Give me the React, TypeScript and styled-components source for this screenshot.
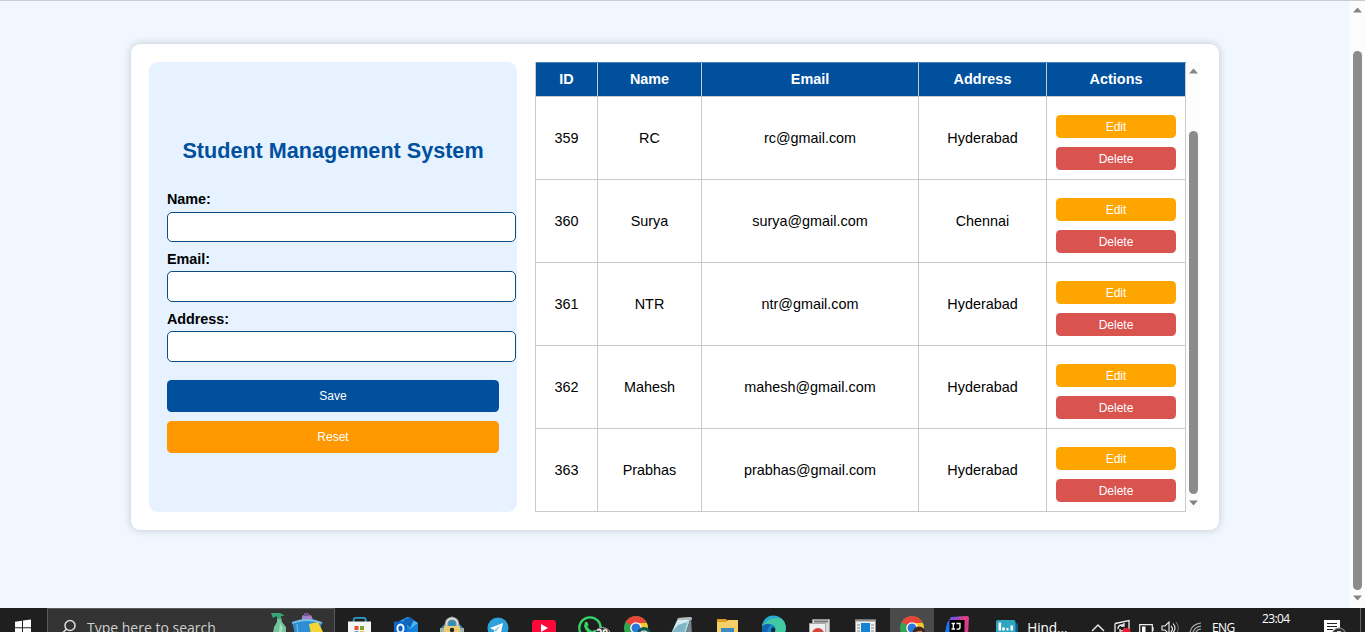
import React from 'react';
import styled, { createGlobalStyle } from 'styled-components';

const GlobalStyle = createGlobalStyle`
  * { box-sizing: border-box; }
  body { margin: 0; overflow: hidden; font-family: "Liberation Sans", Arial, sans-serif; color: #000; }
`;

const Screen = styled.div`
  width: 1365px;
  height: 632px;
  display: flex;
  flex-direction: column;
  overflow: hidden;
`;

const Viewport = styled.main`
  height: 608px;
  display: flex;
  background: #f0f7ff;
  border-top: 1px solid #c8cdd3;
`;

const Page = styled.div`
  width: 1350px;
  padding: 43px 0 0 131px;
`;

const Card = styled.section`
  width: 1088px;
  height: 486px;
  padding: 18px;
  display: flex;
  gap: 18px;
  background: #fff;
  border-radius: 9px;
  box-shadow: 0 0 9px rgba(0, 0, 0, 0.2);
`;

const Form = styled.form`
  width: 368px;
  height: 450px;
  padding: 75px 18px 0;
  display: flex;
  flex-direction: column;
  background: #e6f2ff;
  border-radius: 9px;
`;

const Title = styled.h2`
  margin: 0 0 35px;
  height: 27px;
  line-height: 28px;
  font-size: 21.6px;
  text-align: center;
  white-space: nowrap;
  color: #00509e;
`;

const Label = styled.label<{ $lineHeight?: number }>`
  height: 13px;
  line-height: ${(p) => p.$lineHeight ?? 16}px;
  margin-top: -7px;
  padding-bottom: 20px;
  font-size: 14.4px;
  font-weight: bold;
  letter-spacing: -0.05px;
`;

const Field = styled.input<{ $h: number }>`
  flex: none;
  width: 349px;
  height: ${(p) => p.$h}px;
  margin-bottom: 16px;
  padding: 0 9px;
  border: 1px solid #0f4c81;
  border-radius: 5px;
  background: #fff;
  outline: none;
`;

const FormButton = styled.button<{ $bg: string }>`
  width: 332px;
  height: 32px;
  margin-bottom: 9px;
  padding: 0;
  border: 0;
  border-radius: 4.5px;
  background: ${(p) => p.$bg};
  color: #fff;
  font: 12px "Liberation Sans", Arial, sans-serif;
`;

const Buttons = styled.div`
  display: flex;
  flex-direction: column;
  padding-top: 2px;
`;

const TableArea = styled.div`
  display: flex;
  height: 450px;
`;

const Table = styled.div`
  width: 651px;
  border-left: 1px solid #c8cacc;
`;

const Row = styled.div<{ $head?: boolean }>`
  display: grid;
  grid-template-columns: 62px 104px 217px 128px 139px;
  height: ${(p) => (p.$head ? 35 : 83)}px;
  background: ${(p) => (p.$head ? '#00509e' : '#fff')};
  color: ${(p) => (p.$head ? '#fff' : '#000')};
  font-weight: ${(p) => (p.$head ? 'bold' : 'normal')};
  border-top: ${(p) => (p.$head ? '1px solid #4b83b8' : '0')};
`;

const Cell = styled.div<{ $spacing?: number }>`
  display: flex;
  align-items: center;
  justify-content: center;
  font-size: 14.4px;
  letter-spacing: ${(p) => p.$spacing ?? 0}px;
  border-right: 1px solid #c8cacc;
  border-bottom: 1px solid #c8cacc;
`;

const HeadCell = styled(Cell)`
  padding-bottom: 2px;
`;

const Actions = styled.div`
  padding: 18px 9px 0;
  display: flex;
  flex-direction: column;
  gap: 9px;
  border-right: 1px solid #c8cacc;
  border-bottom: 1px solid #c8cacc;
`;

const ActionButton = styled.button<{ $bg: string }>`
  width: 120px;
  height: 23px;
  padding: 0;
  border: 0;
  border-radius: 4.5px;
  background: ${(p) => p.$bg};
  color: #fff;
  font: 12px "Liberation Sans", Arial, sans-serif;
`;

const ScrollTrack = styled.div<{ $top: number; $w: number }>`
  width: ${(p) => p.$w}px;
  height: 100%;
  padding: ${(p) => p.$top}px 0 0 3px;
  display: flex;
  flex-direction: column;
  background: #fcfcfc;
`;

const Thumb = styled.div<{ $before: number; $h: number; $after: number }>`
  width: 9px;
  height: ${(p) => p.$h}px;
  margin: ${(p) => p.$before}px 0 ${(p) => p.$after}px;
  border-radius: 5px;
  background: #8b8b8b;
`;

const ArrowSvg = styled.svg`
  display: block;
  flex: none;
`;

const Arrow = ({ down }: { down?: boolean }) => (
  <ArrowSvg width="9" height="6" viewBox="0 0 9 6">
    <path d={down ? 'M0 .5h9L4.5 5.5z' : 'M0 5.5h9L4.5 .5z'} fill="#858585" />
  </ArrowSvg>
);

const Taskbar = styled.footer`
  height: 24px;
  display: flex;
  overflow: hidden;
  background: #1f1f1f;
  color: #fff;
  font-family: "Open Sans", "Noto Sans", sans-serif;
  > svg { flex: none; }
`;

const SearchBox = styled.div`
  width: 288px;
  height: 40px;
  display: flex;
  flex: none;
  background: #333;
  border: 1px solid #5a5a5a;
  margin-right: 1px;
`;

const SearchText = styled.span`
  width: 181px;
  height: 30px;
  padding-top: 9px;
  line-height: 20px;
  font-size: 14px;
  white-space: nowrap;
  color: #d0d0d0;
`;

const Slot = styled.div<{ $active?: boolean }>`
  width: 46px;
  height: 24px;
  flex: none;
  background: ${(p) => (p.$active ? 'linear-gradient(90deg, #1f1f1f 2px, #4a4a4a 2px)' : 'none')};
  svg { display: block; }
`;

const TrayText = styled.span<{ $w: number; $top: number; $size: number }>`
  width: ${(p) => p.$w}px;
  flex: none;
  padding-top: ${(p) => p.$top}px;
  line-height: 18px;
  font-size: ${(p) => p.$size}px;
  letter-spacing: ${(p) => (p.$size < 13 ? -0.6 : -0.1)}px;
  white-space: nowrap;
`;

const Badge = styled.text`
  font: bold 10px "Open Sans", sans-serif;
  fill: #fff;
`;

const icons: { name: string; active?: boolean; art: React.ReactNode }[] = [
  {
    name: 'store',
    art: (
      <>
        <path d="M17.700 15v-3.200q0-2 2-2h8q2 0 2 2V15" fill="none" stroke="#2e9fc9" strokeWidth="1.800" />
        <path d="M12 13.500h23V30H12z" fill="#f5f5f5" />
        <path d="M18.500 18h4v4h-4z" fill="#e2522f" /><path d="M24 18h4v4h-4z" fill="#7ba82c" />
        <path d="M18.500 23.200h4v4h-4z" fill="#27a0da" /><path d="M24 23.200h4v4h-4z" fill="#f1b521" />
      </>
    ),
  },
  {
    name: 'outlook',
    art: (
      <>
        <path d="M17 13l9-4 10 6v12H17z" fill="#1681d8" />
        <path d="M26 9l10 6-8 6-8-9z" fill="#45b8f2" /><path d="M21 12l7-3 4 3-4 8z" fill="#1263b5" />
        <path d="M12 13.500h13V30H12z" fill="#0a68c8" />
        <ellipse cx="18.500" cy="20.500" rx="3.100" ry="4" fill="none" stroke="#fff" strokeWidth="1.900" />
      </>
    ),
  },
  {
    name: 'lock',
    art: (
      <>
        <path d="M24 8l12 13H12z" fill="#2f91ba" />
        <path d="M18.500 19v-3.500a5.500 5 0 0 1 11 0V19" fill="none" stroke="#8c8c88" strokeWidth="3.600" />
        <path d="M18.500 19v-3.500a5.500 5 0 0 1 11 0V19" fill="none" stroke="#deded8" strokeWidth="1.800" />
        <path d="M16 18h16v12H16z" fill="#e9ca73" /><circle cx="24" cy="22" r="2.200" fill="#272318" /><path d="M23 22h2v4h-2z" fill="#272318" />
        <path d="M12 20h4v5h-4zM32 20h4v5h-4z" fill="#9fb7aa" />
      </>
    ),
  },
  {
    name: 'messages',
    art: (
      <>
        <circle cx="24" cy="20" r="10.500" fill="#2ba3da" />
        <path d="M16 20l13-5-2.500 12-4-3-2 2-.5-4z" fill="#fff" /><path d="M20 22l7-5-5 7" fill="#a6cfe2" />
      </>
    ),
  },
  {
    name: 'video',
    art: (
      <>
        <rect x="12" y="12" width="24" height="19" rx="3" fill="#fc0839" />
        <path d="M21 16l7 4-7 4z" fill="#fff" />
      </>
    ),
  },
  {
    name: 'chat',
    art: (
      <>
        <circle cx="24" cy="20" r="10.700" fill="#1f1f1f" stroke="#35d366" strokeWidth="2.300" />
        <path d="M19 14q2-1 2.800 1l.8 2-1.300 1.700q1.800 3 5 4.500l1.700-1.500 3 1.500-1 3q-9 1-12-8z" fill="#35d366" />
        <circle cx="36.500" cy="28" r="8.500" fill="#303030" stroke="#aaa" />
        <Badge x="30.500" y="28.500">20</Badge>
      </>
    ),
  },
  {
    name: 'browser',
    art: (
      <>
        <circle cx="24" cy="20" r="12" fill="#33a552" />
        <path d="M24 20L13.600 14a12 12 0 0 1 20.800 0z" fill="#e8443a" /><path d="M24 15h10.900A12 12 0 0 1 30 30z" fill="#fac72b" />
        <circle cx="24" cy="20" r="5.800" fill="#fff" /><circle cx="24" cy="20" r="4.500" fill="#2d76dc" />
        <circle cx="32" cy="26" r="7" fill="#0b5a50" /><path d="M28.500 26q0-3 3.500-3t3.500 3" fill="none" stroke="#c3d6d1" strokeWidth="1.500" />
      </>
    ),
  },
  {
    name: 'notes',
    art: (
      <>
        <path d="M20 10l13-1-6 19H12z" fill="#a9d4df" /><path d="M21 10l10 0-7 14H14z" fill="#d5edf0" />
        <path d="M33 9l1 17-5 4-2-2z" fill="#76858a" /><path d="M20 10l14-.5v2.200l-14 .3z" fill="#b8b9b4" />
        <path d="M12 26l8-9 9-3-4 14z" fill="#80b4c7" />
      </>
    ),
  },
  {
    name: 'files',
    art: (
      <>
        <path d="M13 11h9l2 2h10v17H13z" fill="#d99d23" /><path d="M13 14h9l2-2h10v18H13z" fill="#f6cf66" />
        <path d="M17 20h13v9H17z" fill="#3c8ac4" />
      </>
    ),
  },
  {
    name: 'edge',
    art: (
      <>
        <circle cx="24" cy="20" r="12" fill="#1689ce" />
        <path d="M12 18C15 4 35 5 36 20c0 7-9 8-12 4q4-4-1-7-5-3-11 1z" fill="#42c9a2" />
        <path d="M12 18C14 6 26 5 31 11q-10-4-19 7z" fill="#29a9d6" /><path d="M12 21q2-7 9-4-5 3-3 13-7-3-6-9z" fill="#1264b0" />
        <path d="M23 19q-2 1-2 3 0 5 7 5-3-2-3-4 1-2-2-4z" fill="#172c39" />
      </>
    ),
  },
  {
    name: 'capture',
    art: (
      <>
        <path d="M16.500 11.500h17V30h-17z" fill="#d8d8d8" stroke="#999" />
        <path d="M18 13.500h14" stroke="#777" strokeWidth="2" />
        <path d="M13.500 15.500h16V30h-16z" fill="#eee" stroke="#aaa" />
        <circle cx="22" cy="26" r="6" fill="#d44337" />
      </>
    ),
  },
  {
    name: 'reader',
    art: (
      <>
        <path d="M13.500 12h20v18h-20z" fill="#f2f2f2" stroke="#969696" />
        <path d="M13 12.500h21" stroke="#909090" strokeWidth="2" /><path d="M19 15h9v15h-9z" fill="#1682d5" />
        <path d="M15 17h3m-3 3h3m-3 3h3m11-6h3m-3 3h3m-3 3h3" stroke="#858585" />
      </>
    ),
  },
  {
    name: 'active-browser',
    active: true,
    art: (
      <>
        <circle cx="24" cy="20" r="12" fill="#33a552" />
        <path d="M24 20L13.600 14a12 12 0 0 1 20.800 0z" fill="#e8443a" /><path d="M24 15h10.900A12 12 0 0 1 30 30z" fill="#fac72b" />
        <circle cx="24" cy="20" r="5.800" fill="#fff" /><circle cx="24" cy="20" r="4.500" fill="#2d76dc" />
        <circle cx="31" cy="25" r="6.500" fill="#3d251e" /><path d="M27 24l6-1.500 2 2v5h-8z" fill="#c58362" />
      </>
    ),
  },
  {
    name: 'ide',
    art: (
      <>
        <path d="M17 9l17-1v20l-8 4-15-7 2-10z" fill="#1976ee" /><path d="M21 9l12-1q2 0 2 2l-1 17-9-1z" fill="#d93e89" />
        <path d="M17 9h9l-5 7h-7z" fill="#8d49d8" /><path d="M15.500 12h15v15h-15z" fill="#000" />
        <path d="M17.500 15.500h3.500m-1.700 0v5.500M17.500 21h3.500m1.500-5.500h3.500v4q0 1.700-2 1.700h-1.500" fill="none" stroke="#fff" strokeWidth="1.300" />
      </>
    ),
  },
  {
    name: 'monitor',
    art: (
      <>
        <path d="M28 15h8q2 0 2 2v13H28z" fill="#0c5b91" /><rect x="16" y="12" width="19.500" height="18" rx="2" fill="#30a5c2" />
        <path d="M19.800 14.500v8m3.700-3v3m8.300-5v5" stroke="#fff" strokeWidth="2.600" /><path d="M26.500 20h2v2.500h-2z" fill="#fff" />
      </>
    ),
  },
];

const students = [
  { id: 359, name: 'RC', email: 'rc@gmail.com', address: 'Hyderabad' },
  { id: 360, name: 'Surya', email: 'surya@gmail.com', address: 'Chennai' },
  { id: 361, name: 'NTR', email: 'ntr@gmail.com', address: 'Hyderabad' },
  { id: 362, name: 'Mahesh', email: 'mahesh@gmail.com', address: 'Hyderabad' },
  { id: 363, name: 'Prabhas', email: 'prabhas@gmail.com', address: 'Hyderabad' },
];

const CleaningArt = () => (
  <svg width="60" height="24" viewBox="268 609 60 24">
    <path d="M277 617h4l1 5 4 5v6h-13l1-6 3-5z" fill="#73c49a" />
    <path d="M271 613h9l4 2-1 1h-2v3h-4v-3l-4 2z" fill="#36a578" /><path d="M280 623l3 5-1 4h-3z" fill="#a2dfbd" />
    <path d="M302 617q0-2 2-2h5q3 0 3 2l2 6h-13z" fill="#a284c6" /><path d="M304 613h5v3h-5z" fill="#70558d" />
    <path d="M292 622q15-4 30 0l-3 12h-24z" fill="#2d8ed6" /><path d="M292 623q15-6 30 0" fill="none" stroke="#77c2eb" strokeWidth="1.800" />
    <path d="M309 624l9-2 6 12h-13z" fill="#f4d636" /><path d="M297 624q0 5 1 9" fill="none" stroke="#77c2eb" />
  </svg>
);

const Tray = () => (
  <svg width="121" height="24" viewBox="1091 608 121 24" fill="none">
    <path d="M1092 631l6-6 6 6" stroke="#e5e5e5" strokeWidth="1.500" />
    <path d="M1115 623.500l14-3V632m-14-8.500V632" stroke="#eee" strokeWidth="1.300" />
    <path d="M1118 629q0-4 4-4h2m0-2v3h-3m4 2q0 3-5 3v-2" stroke="#eee" strokeWidth="1.300" />
    <circle cx="1126.500" cy="632" r="4" fill="#e91931" />
    <path d="M1139.700 624.700h12.600v9h-12.600zM1153 627v4" stroke="#eee" strokeWidth="1.200" /><path d="M1142 626.500h3.500v6H1142z" fill="#fff" />
    <path d="M1162 626h3l4-4v12l-4-4h-3zM1171 626q3 3 0 6M1173 623.500q4 4.500 0 9" stroke="#eee" strokeWidth="1.100" /><path d="M1176 622q4 5 1 11" stroke="#777" />
    <path d="M1190 632q2-8 11-9m-8 9q2-5 8-6m-5 6q2-3 5-3" stroke="#bbb" strokeWidth="1.100" />
  </svg>
);

export default function App() {
  return (
    <Screen>
      <GlobalStyle />
      <Viewport>
        <Page>
          <Card>
            <Form onSubmit={(e) => e.preventDefault()}>
              <Title>Student Management System</Title>
              <Label htmlFor="name" $lineHeight={14}>Name:</Label>
              <Field id="name" $h={30} />
              <Label htmlFor="email">Email:</Label>
              <Field id="email" $h={31} />
              <Label htmlFor="address">Address:</Label>
              <Field id="address" $h={31} />
              <Buttons>
                <FormButton type="submit" $bg="#00509e">Save</FormButton>
                <FormButton type="reset" $bg="#ff9800">Reset</FormButton>
              </Buttons>
            </Form>
            <TableArea>
              <Table>
                <Row $head>
                  <HeadCell>ID</HeadCell>
                  <HeadCell>Name</HeadCell>
                  <HeadCell>Email</HeadCell>
                  <HeadCell $spacing={0.05}>Address</HeadCell>
                  <HeadCell $spacing={0.05}>Actions</HeadCell>
                </Row>
                {students.map((s) => (
                  <Row key={s.id}>
                    <Cell>{s.id}</Cell>
                    <Cell>{s.name}</Cell>
                    <Cell>{s.email}</Cell>
                    <Cell>{s.address}</Cell>
                    <Actions>
                      <ActionButton $bg="#ffa500">Edit</ActionButton>
                      <ActionButton $bg="#d9534f">Delete</ActionButton>
                    </Actions>
                  </Row>
                ))}
              </Table>
              <ScrollTrack $w={14} $top={6}>
                <Arrow />
                <Thumb $before={57} $h={363} $after={6} />
                <Arrow down />
              </ScrollTrack>
            </TableArea>
          </Card>
        </Page>
        <ScrollTrack $w={15} $top={6}>
          <Arrow />
          <Thumb $before={38} $h={539} $after={5} />
          <Arrow down />
        </ScrollTrack>
      </Viewport>
      <Taskbar>
        <svg width="47" height="24" viewBox="0 0 47 24">
          <path d="M15 13.700l7-1v6.600h-7zM23 12.500l8-1v7.800h-8zM15 20.300h7V27h-7zM23 20.300h8V28h-8z" fill="#fff" />
        </svg>
        <SearchBox>
          <svg width="39" height="24" viewBox="48 609 39 24">
            <circle cx="70" cy="625.500" r="5" fill="none" stroke="#ddd" strokeWidth="1.500" /><path d="M66.500 629l-4 4" stroke="#ddd" strokeWidth="1.500" />
          </svg>
          <SearchText>Type here to search</SearchText>
          <CleaningArt />
        </SearchBox>
        {icons.map((i) => (
          <Slot key={i.name} $active={i.active}>
            <svg width="46" height="24" viewBox="0 0 46 24">{i.art}</svg>
          </Slot>
        ))}
        <TrayText $w={65} $top={11} $size={13.6}>&#8202;Hind...</TrayText>
        <Tray />
        <TrayText $w={50} $top={11} $size={12}>ENG</TrayText>
        <TrayText $w={62} $top={2} $size={12}>23:04</TrayText>
        <svg width="41" height="24" viewBox="1324 608 41 24">
          <path d="M1324 620h16v12h-16z" fill="#fff" /><path d="M1327 623.500h10m-10 3h10m-10 3h6" stroke="#222" />
          <circle cx="1339" cy="635" r="7" fill="#303030" stroke="#999" /><path d="M1337 631.500h4" stroke="#ccc" /><path d="M1360.500 608v24" stroke="#666" />
        </svg>
      </Taskbar>
    </Screen>
  );
}
